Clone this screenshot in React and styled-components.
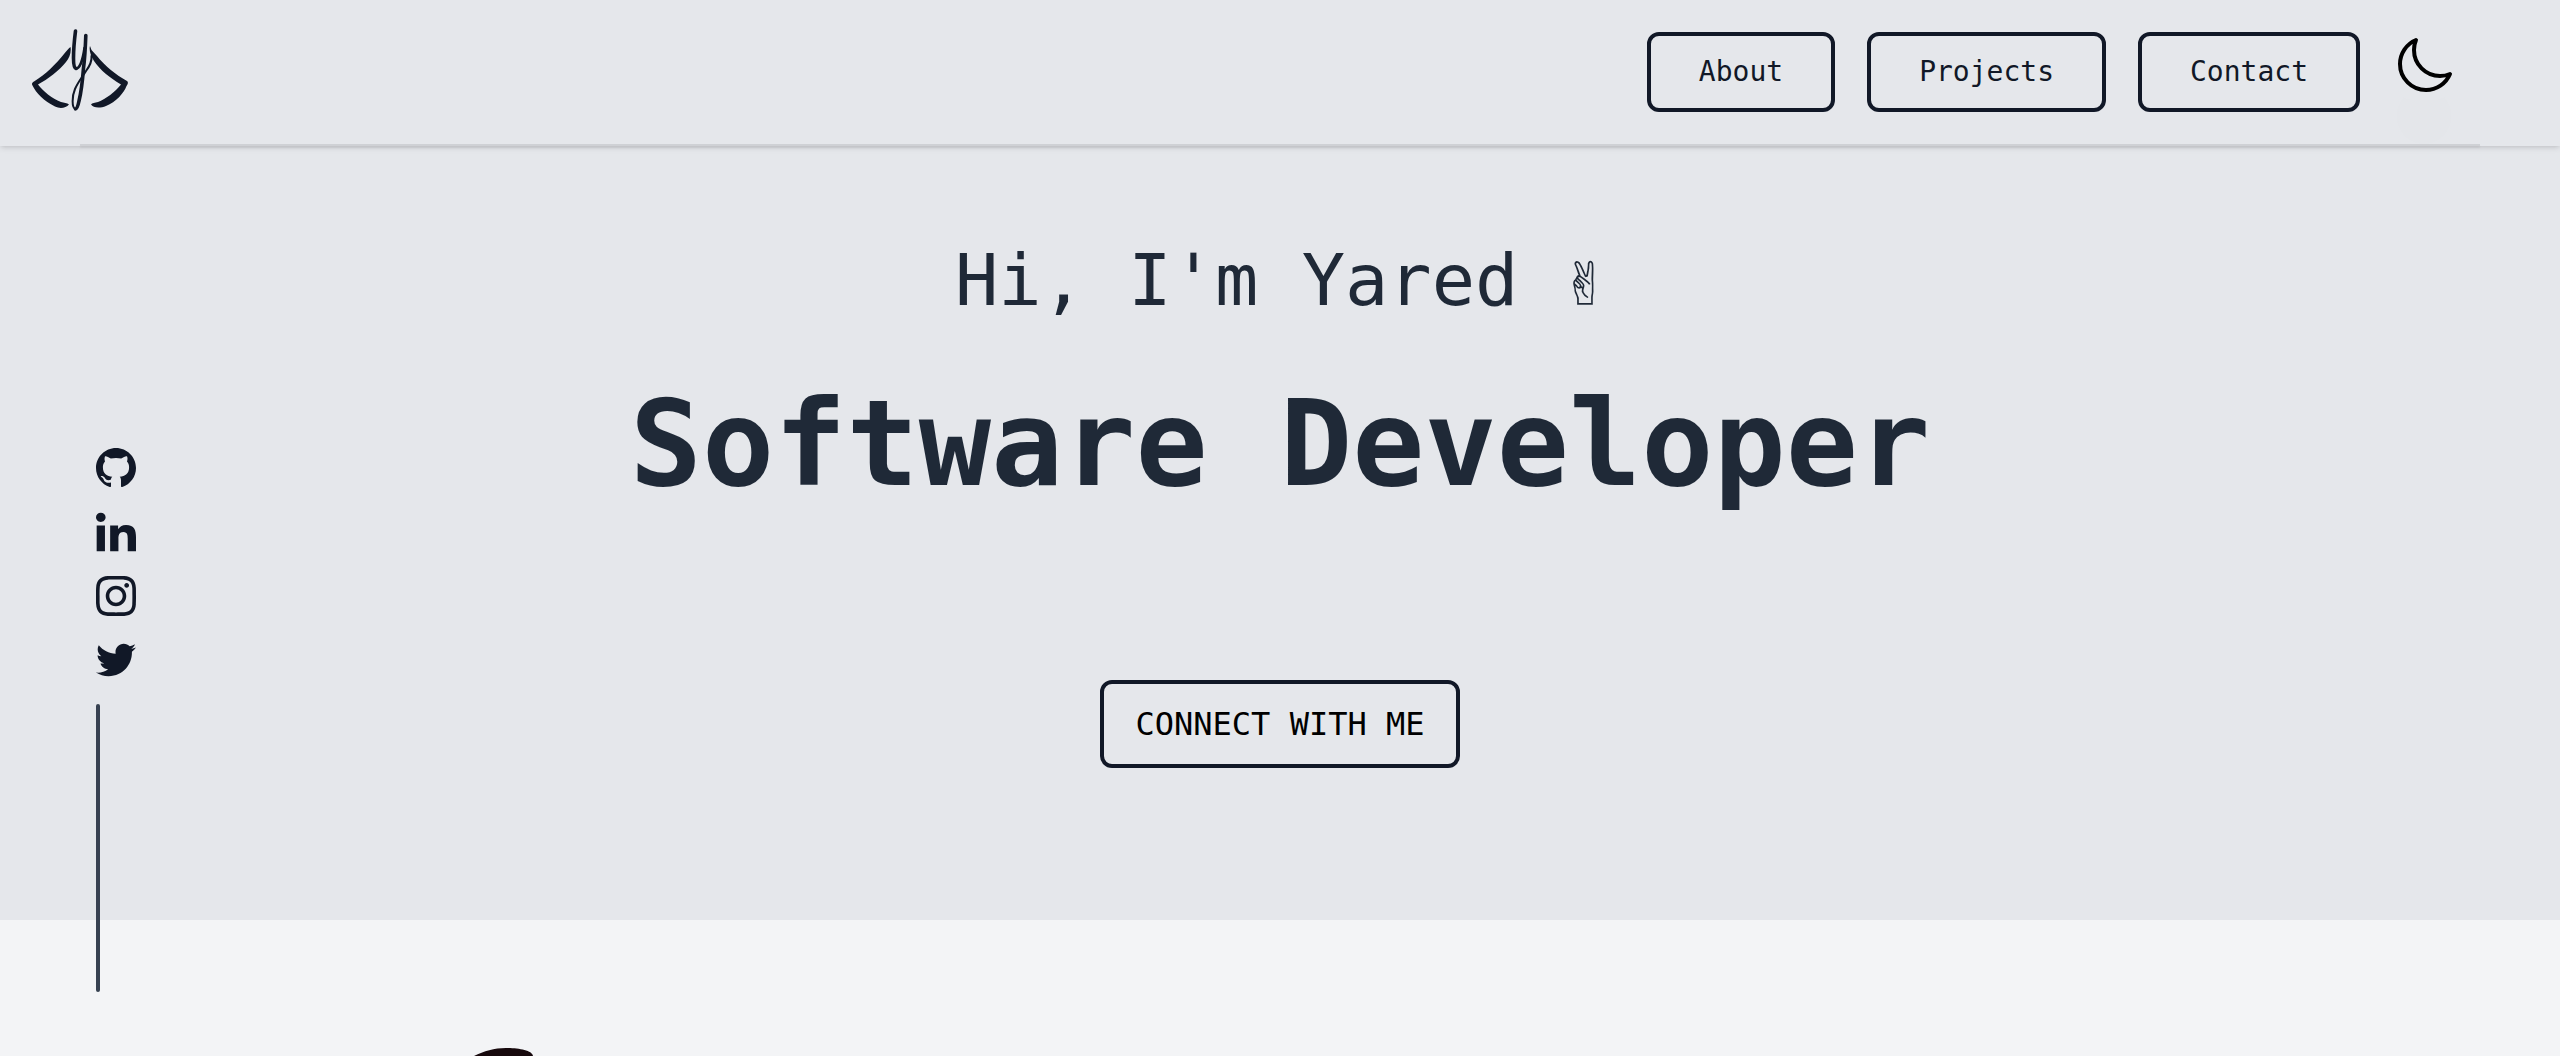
import React from "react";
import styled, { createGlobalStyle } from "styled-components";

const ink = "#111827";

const GlobalStyle = createGlobalStyle`
  *, *::before, *::after { box-sizing: border-box; }
  body {
    margin: 0;
    background: #f3f4f6;
    color: #1f2937;
    font-family: "DejaVu Sans Mono", monospace;
  }
`;

const Page = styled.div`
  display: flex;
  flex-direction: column;
  min-height: 100vh;
`;

const Header = styled.header`
  position: relative;
  z-index: 1;
  background: #e5e7eb;
  box-shadow: 0 2px 6px rgba(0, 0, 0, 0.1), 0 2px 4px -2px rgba(0, 0, 0, 0.1);
`;

const Bar = styled.div`
  display: flex;
  justify-content: space-between;
  align-items: flex-start;
  padding: 24px 104px 32px 32px;
`;

const Divider = styled.div`
  height: 2px;
  margin: 0 80px;
  background: #cfd1d5;
  box-shadow: 0 2px 2px rgba(0, 0, 0, 0.06);
`;

const LogoLink = styled.a`
  display: block;
  height: 88px;
  color: ${ink};
`;

const Nav = styled.nav`
  display: flex;
  align-items: flex-start;
  gap: 32px;
  padding-top: 8px;
`;

const OutlineButton = styled.button`
  padding: 16px ${(p) => (p.$large ? 32 : 48)}px;
  border: 4px solid ${ink};
  border-radius: 12px;
  background: transparent;
  color: ${(p) => (p.$large ? "#000" : ink)};
  font-family: inherit;
  font-size: ${(p) => (p.$large ? 32 : 28)}px;
  line-height: ${(p) => (p.$large ? 48 : 40)}px;
  cursor: pointer;
`;

const ThemeToggle = styled.button`
  padding: 2px 0;
  border: 0;
  border-radius: 24px;
  background: transparent;
  color: #000;
  box-shadow: 0 50px 40px -8px rgba(0, 0, 0, 0.01);
  cursor: pointer;

  svg { display: block; }
`;

const Hero = styled.section`
  display: flex;
  flex-direction: column;
  align-items: center;
  padding: 94px 32px 152px;
  background: #e5e7eb;
  text-align: center;
`;

const Greeting = styled.p`
  margin: 0;
  font-size: 72px;
  line-height: 80px;
`;

const Title = styled.h1`
  margin: 64px 0 176px;
  font-size: 120px;
  line-height: 120px;
  font-weight: 700;
`;

const About = styled.section`
  flex: 1;
  padding: 128px 472px 0;
`;

const Portrait = styled.svg`
  display: block;
`;

const Social = styled.aside`
  position: fixed;
  z-index: 2;
  top: 448px;
  left: 96px;
  display: flex;
  flex-direction: column;
  gap: 24px;
`;

const SocialLink = styled.a`
  height: 40px;
  color: ${ink};

  svg { display: block; }
`;

const Rule = styled.div`
  width: 4px;
  height: 288px;
  border-radius: 2px;
  background: #374151;
`;

const socials = [
  {
    name: "GitHub",
    box: "0 0 40 40",
    d: "M20 0C9 0 0 9 0 20c0 8.800 5.700 16.300 13.700 19 1 .2 1.300-.4 1.300-1v-3.400C9.500 35.800 8 32.500 8 32.300C7 29.500 5.200 29.200 4.800 28.600C4.500 27.700 7.500 27.600 8.900 30C10.500 33 13.500 32.200 15 31.400C15.100 30.200 15.700 29.300 16.300 28.800C11 28.200 6.900 26 6.900 19C6.900 16.800 7.600 14.900 9 13.400C8.500 12 8.300 10.500 9 8.300C10.500 8 12.500 9 14.800 10.600C18 9.700 22 9.700 25.200 10.600C27.500 9 29.500 8 31 8.300c.9 2.200.5 3.700 0 5.100C32.400 14.900 33.100 16.800 33.100 19C33.100 26 29 28.200 23.700 28.800C24.500 29.500 25 30.700 25 32.500V38c0 .6.3 1.200 1.300 1C34.300 36.300 40 28.800 40 20C40 9 31 0 20 0Z",
  },
  {
    name: "LinkedIn",
    box: "0 -8 448 464",
    d: "M100.28 448H7.4V148.9h92.88zM53.79 108.1C24.09 108.1 0 83.5 0 53.8a53.79 53.79 0 0 1 107.58 0c0 29.7-24.1 54.3-53.79 54.3zM447.9 448h-92.68V302.4c0-34.7-.7-79.2-48.29-79.2-48.29 0-55.69 37.7-55.69 76.7V448h-92.78V148.9h89.08v40.8h1.3c12.4-23.5 42.69-48.3 87.88-48.3 94 0 111.28 61.9 111.28 142.3V448z",
  },
  {
    name: "Instagram",
    box: "0 0 24 24",
    d: "M12 2.163c3.204 0 3.584.012 4.85.07 3.252.148 4.771 1.691 4.919 4.919.058 1.265.069 1.645.069 4.849 0 3.205-.012 3.584-.069 4.849-.149 3.225-1.664 4.771-4.919 4.919-1.266.058-1.644.07-4.85.07-3.204 0-3.584-.012-4.849-.07-3.26-.149-4.771-1.699-4.919-4.92-.058-1.265-.07-1.644-.07-4.849 0-3.204.013-3.583.07-4.849.149-3.227 1.664-4.771 4.919-4.919 1.266-.057 1.645-.069 4.849-.069zm0-2.163c-3.259 0-3.667.014-4.947.072-4.358.2-6.78 2.618-6.98 6.98-.059 1.281-.073 1.689-.073 4.948 0 3.259.014 3.668.072 4.948.2 4.358 2.618 6.78 6.98 6.98 1.281.058 1.689.072 4.948.072 3.259 0 3.668-.014 4.948-.072 4.354-.2 6.782-2.618 6.979-6.98.059-1.28.073-1.689.073-4.948 0-3.259-.014-3.667-.072-4.947-.196-4.354-2.617-6.78-6.979-6.98-1.281-.059-1.69-.073-4.949-.073zm0 5.838c-3.403 0-6.162 2.759-6.162 6.162s2.759 6.163 6.162 6.163 6.162-2.759 6.162-6.163c0-3.403-2.759-6.162-6.162-6.162zm0 10.162c-2.209 0-4-1.79-4-4 0-2.209 1.791-4 4-4s4 1.791 4 4c0 2.21-1.791 4-4 4zm6.406-11.845c-.796 0-1.441.645-1.441 1.44s.645 1.44 1.441 1.44c.795 0 1.439-.645 1.439-1.44s-.644-1.44-1.439-1.44z",
  },
  {
    name: "Twitter",
    box: "0 0 24 24",
    d: "M24 4.557c-.883.392-1.832.656-2.828.775 1.017-.609 1.798-1.574 2.165-2.724-.951.564-2.005.974-3.127 1.195-.897-.957-2.178-1.555-3.594-1.555-3.179 0-5.515 2.966-4.797 6.045-4.091-.205-7.719-2.165-10.148-5.144-1.29 2.213-.669 5.108 1.523 6.574-.806-.026-1.566-.247-2.229-.616-.054 2.281 1.581 4.415 3.949 4.89-.693.188-1.452.232-2.224.084.626 1.956 2.444 3.379 4.6 3.419-2.07 1.623-4.678 2.348-7.29 2.04 2.179 1.397 4.768 2.212 7.548 2.212 9.142 0 14.307-7.721 13.995-14.646.962-.695 1.797-1.562 2.457-2.549z",
  },
];

function Logo() {
  return (
    <svg width="96" height="88" viewBox="0 0 96 88" fill="currentColor" aria-hidden="true">
      {/* left swoosh: upper and lower blades */}
      <path d="M38.500 23C37 24 34.500 27 32 30C24 40 14 50 2 57.500C0 58.500 -.5 60 .5 61.500C4 69 12 77 23 82.500C28 85 34 84 37 80.500C35 79 32 79 29 78C20 74.500 11 67 6 60.500C16 55 27 47 34 38C37.500 34 39.500 28 38.500 23Z" />
      {/* right swoosh */}
      <path d="M58 22C57 25 58 31 62 37C68 46 78 54 89 60.500C83 68 74 75 66 78C63 79 60 79 59 80.500C61 84 68 84.500 74 82C84 78 92 69 94.500 62C96 60 96.500 58 95 57C84 51 73 42 65 32C62 28.500 60 27 59.500 26Z" />
      {/* central flourish */}
      <g fill="none" stroke="currentColor" strokeLinecap="round" strokeLinejoin="round">
        <path strokeWidth="3.6" d="M43.500 7C42.500 15 41.500 25 41.500 34C41.500 40 42 44 44 44.500" />
        <path strokeWidth="2.6" d="M44 44.500C48 44.500 51 35 52.500 24" />
        <path strokeWidth="3.6" d="M53.800 11.500C53.500 20 53 33 51.500 44C50.500 57 49 69 47 77C46 82 45 85 43.500 85" />
        <path strokeWidth="2" d="M43.500 85C39.500 84 40 72 43 65C46 58 51 52 54 47C57 43 60 37 59.500 32" />
      </g>
    </svg>
  );
}

function MoonIcon() {
  return (
    <svg width="64" height="64" viewBox="0 0 24 24" fill="none" stroke="currentColor" strokeWidth="1.5" strokeLinecap="round" strokeLinejoin="round" aria-hidden="true">
      <path d="M21.752 15.002A9.718 9.718 0 0118 15.750c-5.385 0-9.750-4.365-9.750-9.750 0-1.330.266-2.597.748-3.752A9.753 9.753 0 003 11.250C3 16.635 7.365 21 12.750 21a9.753 9.753 0 009.002-5.998z" />
    </svg>
  );
}

export default function App() {
  return (
    <>
      <GlobalStyle />
      <Page>
        <Header>
          <Bar>
            <LogoLink href="#home" aria-label="Home">
              <Logo />
            </LogoLink>
            <Nav>
              <OutlineButton type="button">About</OutlineButton>
              <OutlineButton type="button">Projects</OutlineButton>
              <OutlineButton type="button">Contact</OutlineButton>
              <ThemeToggle type="button" aria-label="Toggle dark mode">
                <MoonIcon />
              </ThemeToggle>
            </Nav>
          </Bar>
          <Divider />
        </Header>
        <Social>
          {socials.map((s) => (
            <SocialLink key={s.name} href={`#${s.name.toLowerCase()}`} aria-label={s.name}>
              <svg width="40" height="40" viewBox={s.box} preserveAspectRatio="none" fill="currentColor" aria-hidden="true">
                <path d={s.d} />
              </svg>
            </SocialLink>
          ))}
          <Rule />
        </Social>
        <Hero>
          <Greeting>Hi, I'm Yared ✌</Greeting>
          <Title>Software Developer</Title>
          <OutlineButton type="button" $large>
            CONNECT WITH ME
          </OutlineButton>
        </Hero>
        <About>
          <Portrait width="64" height="8" viewBox="0 0 64 8" aria-hidden="true">
            <path d="M2 8C12 3 22 0 34 0C46 0 60 2 61 8Z" fill="#17090d" />
          </Portrait>
        </About>
      </Page>
    </>
  );
}
